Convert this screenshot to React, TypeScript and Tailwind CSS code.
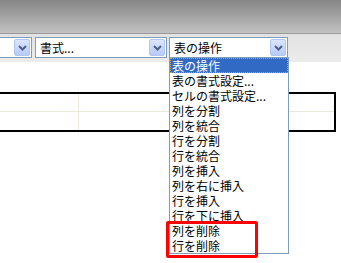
import React from "react";

const font = { fontFamily: '"Noto Sans CJK JP", "Noto Sans", sans-serif' };

function Btn() {
  return (
    <div className="flex h-full w-[16px] items-center justify-center rounded-[2px] border border-[#b3c6f3] bg-gradient-to-b from-[#dbe6fe] to-[#b7cbf8]">
      <svg width="9" height="6" viewBox="0 0 9 6">
        <path d="M1 1 L4.5 4.5 L8 1" fill="none" stroke="#4d6185" strokeWidth="2" />
      </svg>
    </div>
  );
}

function Select({ w, text, className = "" }: { w: string; text: string; className?: string }) {
  return (
    <div className={`flex h-[21px] items-stretch border border-[#7f9db9] bg-white p-px ${w} ${className}`}>
      <div className="flex-1 pl-[3px] text-[12px] leading-[17px] text-black whitespace-nowrap overflow-hidden">{text}</div>
      <Btn />
    </div>
  );
}

const items = [
  "表の操作",
  "表の書式設定...",
  "セルの書式設定...",
  "列を分割",
  "列を統合",
  "行を分割",
  "行を統合",
  "列を挿入",
  "列を右に挿入",
  "行を挿入",
  "行を下に挿入",
  "列を削除",
  "行を削除",
];

export default function App() {
  return (
    <div className="relative h-[263px] w-[341px] overflow-hidden bg-white" style={font}>
      <div className="h-[33px] bg-gradient-to-b from-[#868686] to-[#c2c2c2]" />
      <div className="h-px bg-[#9a9a9a]" />
      <div className="flex h-[28px] items-start gap-[3px] bg-gradient-to-b from-[#e2e2e2] to-[#ececec] pt-[3px]">
        <Select w="w-[130px]" text="" className="ml-[-98px] shrink-0" />
        <Select w="w-[132px]" text="書式..." className="shrink-0" />
        <Select w="w-[119px]" text="表の操作" className="ml-[-1px] shrink-0" />
      </div>
      <div className="mt-[30px] w-[336px] border-y-2 border-r-2 border-black">
        <div className="grid grid-cols-[79px_1fr]">
          <div className="h-[18px] border-b border-r border-[#ece9d8]" />
          <div className="h-[18px] border-b border-[#ece9d8]" />
          <div className="h-[18px] border-r border-[#ece9d8]" />
          <div className="h-[18px]" />
        </div>
      </div>

      <div className="absolute left-[169px] top-[57px] w-[120px] border border-[#7f9db9] bg-white">
        {items.map((t, i) => (
          <div
            key={t}
            className={`h-[15px] pl-[2px] text-[12px] leading-[15px] whitespace-nowrap ${
              i === 0 ? "bg-[#316ac5] text-white outline-1 outline-dotted outline-offset-[-1px] outline-[#e0a040]" : "text-black"
            }`}
          >
            {t}
          </div>
        ))}
      </div>

      <div className="absolute left-[166px] top-[221px] h-[37px] w-[92px] rounded-[2px] border-[3px] border-[#ff0000]" />
    </div>
  );
}
